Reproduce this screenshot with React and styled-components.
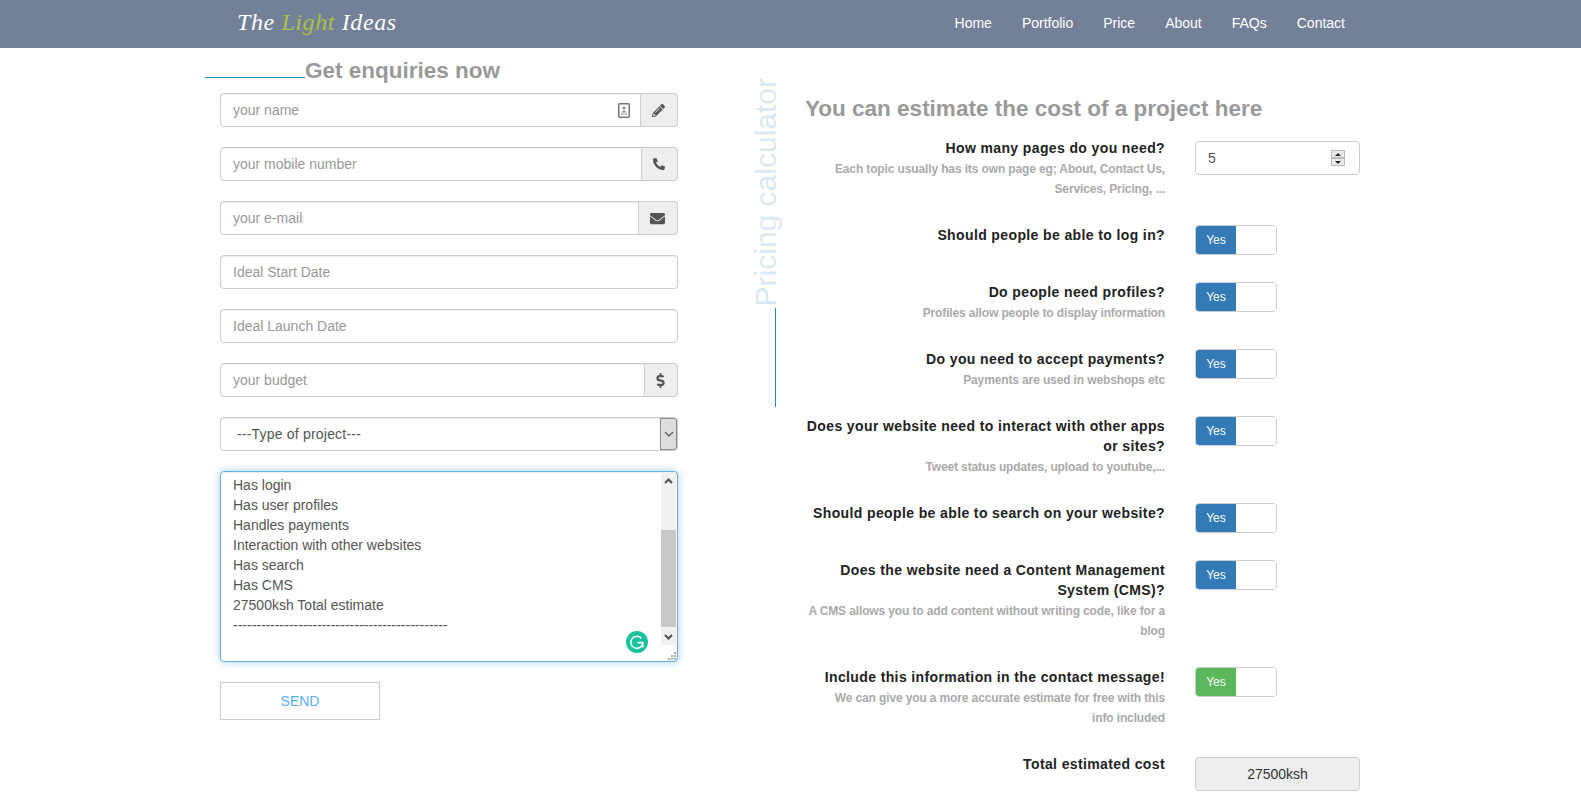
import styled, { createGlobalStyle } from 'styled-components';
import { FaPencilAlt, FaPhoneAlt, FaEnvelope, FaDollarSign } from 'react-icons/fa';

const GlobalStyle = createGlobalStyle`
  * { box-sizing: border-box; }
  body {
    margin: 0;
    background: #fff;
    font-family: "Liberation Sans", Arial, sans-serif;
    font-size: 14px;
    color: #333;
  }
`;

const NAV_ITEMS = ['Home', 'Portfolio', 'Price', 'About', 'FAQs', 'Contact'];

const QUESTIONS = [
  { title: 'Should people be able to log in?' },
  { title: 'Do people need profiles?', hint: 'Profiles allow people to display information' },
  { title: 'Do you need to accept payments?', hint: 'Payments are used in webshops etc' },
  { title: 'Does your website need to interact with other apps or sites?', hint: 'Tweet status updates, upload to youtube,...' },
  { title: 'Should people be able to search on your website?' },
  { title: 'Does the website need a Content Management System (CMS)?', hint: 'A CMS allows you to add content without writing code, like for a blog' },
  { title: 'Include this information in the contact message!', hint: 'We can give you a more accurate estimate for free with this\ninfo included', green: true },
];

const MESSAGE = [
  'Has login',
  'Has user profiles',
  'Handles payments',
  'Interaction with other websites',
  'Has search',
  'Has CMS',
  '27500ksh Total estimate',
  '----------------------------------------------',
].join('\n');

function ContactCardIcon() {
  return (
    <svg width="12" height="15" viewBox="0 0 12 15">
      <rect x="0.75" y="0.75" width="10.5" height="13.5" rx="1" fill="#fff" stroke="#777" strokeWidth="1.5" />
      <circle cx="6" cy="5" r="1.5" fill="#888" />
      <path d="M3.5 9.5 Q6 5.5 8.5 9.5 Z" fill="#888" />
      <rect x="3" y="10.5" width="6" height="1.5" fill="#bbb" />
    </svg>
  );
}

function GrammarlyIcon() {
  return (
    <svg width="22" height="22" viewBox="0 0 22 22">
      <circle cx="11" cy="11" r="11" fill="#15c39a" />
      <path d="M15.4 7.4 A6 6 0 1 0 16.6 13" fill="none" stroke="#fff" strokeWidth="1.6" />
      <path d="M11.5 11.6 H16.8 V16.4" fill="none" stroke="#fff" strokeWidth="1.6" />
    </svg>
  );
}

export default function App() {
  return (
    <>
      <GlobalStyle />
      <Header>
        <Logo>The <em>Light</em> Ideas</Logo>
        <Nav>
          {NAV_ITEMS.map((item) => <NavLink key={item}>{item}</NavLink>)}
        </Nav>
      </Header>
      <Main>
        <LeftColumn>
          <EnquiryHeading>
            <HeadingRule />
            <HeadingText>Get enquiries now</HeadingText>
          </EnquiryHeading>
          <Form>
            <InputGroup>
              <InputWrap>
                <TextInput placeholder="your name" />
                <AutofillBadge><ContactCardIcon /></AutofillBadge>
              </InputWrap>
              <Addon $width={37}><FaPencilAlt size={13} /></Addon>
            </InputGroup>
            <InputGroup>
              <TextInput placeholder="your mobile number" />
              <Addon $width={36}><FaPhoneAlt size={12} /></Addon>
            </InputGroup>
            <InputGroup>
              <TextInput placeholder="your e-mail" />
              <Addon $width={39}><FaEnvelope size={15} /></Addon>
            </InputGroup>
            <TextInput $alone placeholder="Ideal Start Date" />
            <TextInput $alone placeholder="Ideal Launch Date" />
            <InputGroup>
              <TextInput placeholder="your budget" />
              <Addon $width={33}><FaDollarSign size={15} /></Addon>
            </InputGroup>
            <SelectWrap>
              <ProjectSelect defaultValue="">
                <option value="">---Type of project---</option>
              </ProjectSelect>
              <SelectArrow>
                <svg width="10" height="6" viewBox="0 0 10 6">
                  <path d="M1 1 L5 5 L9 1" fill="none" stroke="#555" strokeWidth="1.2" />
                </svg>
              </SelectArrow>
            </SelectWrap>
            <MessageWrap>
              <MessageArea readOnly value={MESSAGE} spellCheck={false} />
              <Scrollbar>
                <ScrollArrow>
                  <svg width="9" height="6" viewBox="0 0 9 6">
                    <path d="M1 5 L4.5 1.5 L8 5" fill="none" stroke="#505050" strokeWidth="2" />
                  </svg>
                </ScrollArrow>
                <ScrollTrack><ScrollThumb /></ScrollTrack>
                <ScrollArrow>
                  <svg width="9" height="6" viewBox="0 0 9 6">
                    <path d="M1 1 L4.5 4.5 L8 1" fill="none" stroke="#505050" strokeWidth="2" />
                  </svg>
                </ScrollArrow>
              </Scrollbar>
              <GrammarlyBadge><GrammarlyIcon /></GrammarlyBadge>
              <Resizer>
                <svg width="10" height="10" viewBox="0 0 10 10" fill="#aaa">
                  <rect x="7" y="1" width="2" height="2" />
                  <rect x="4" y="4" width="2" height="2" />
                  <rect x="7" y="4" width="2" height="2" />
                  <rect x="1" y="7" width="2" height="2" />
                  <rect x="4" y="7" width="2" height="2" />
                  <rect x="7" y="7" width="2" height="2" />
                </svg>
              </Resizer>
            </MessageWrap>
            <SendButton>SEND</SendButton>
          </Form>
        </LeftColumn>

        <SideLabel>
          <SideText>Pricing calculator</SideText>
          <SideRule />
        </SideLabel>

        <Calculator>
          <CalculatorTitle>You can estimate the cost of a project here</CalculatorTitle>
          <Row>
            <LabelBlock>
              <Question>How many pages do you need?</Question>
              <Hint>Each topic usually has its own page eg; About, Contact Us, Services, Pricing, ...</Hint>
            </LabelBlock>
            <NumberBox>
              <span>5</span>
              <Spinner>
                <SpinButton><SpinUp /></SpinButton>
                <SpinButton><SpinDown /></SpinButton>
              </Spinner>
            </NumberBox>
          </Row>
          {QUESTIONS.map((q) => (
            <Row key={q.title}>
              <LabelBlock>
                <Question>{q.title}</Question>
                {q.hint && <Hint>{q.hint}</Hint>}
              </LabelBlock>
              <Toggle>
                <ToggleOn $green={q.green}>Yes</ToggleOn>
                <ToggleOff />
              </Toggle>
            </Row>
          ))}
          <Row>
            <LabelBlock>
              <Question>Total estimated cost</Question>
            </LabelBlock>
            <TotalBox>27500ksh</TotalBox>
          </Row>
        </Calculator>
      </Main>
    </>
  );
}

const Header = styled.header`
  height: 48px;
  background: #738198;
  display: flex;
  align-items: center;
  justify-content: space-between;
  padding: 0 236px 0 237px;
`;

const Logo = styled.div`
  font-family: "Liberation Serif", serif;
  font-style: italic;
  font-size: 24px;
  letter-spacing: 0.6px;
  color: #fff;
  margin-top: -4px;

  em {
    color: #a9c23f;
  }
`;

const Nav = styled.nav`
  display: flex;
  gap: 30px;
  margin-top: -2px;
`;

const NavLink = styled.a`
  color: #fff;
  font-size: 14px;
`;

const Main = styled.main`
  display: flex;
  padding-left: 205px;
`;

const LeftColumn = styled.section`
  width: 473px;
  padding-top: 7px;
`;

const EnquiryHeading = styled.div`
  display: flex;
  align-items: flex-start;
  height: 30px;
  margin-bottom: 8px;
`;

const HeadingRule = styled.span`
  width: 100px;
  height: 1px;
  margin-top: 22px;
  background: #1b8bbf;
`;

const HeadingText = styled.h2`
  margin: 0;
  font-size: 22.5px;
  line-height: 32px;
  font-weight: 700;
  color: #999;
`;

const Form = styled.form`
  margin-left: 15px;
  display: flex;
  flex-direction: column;
  gap: 20px;
`;

const InputGroup = styled.div`
  display: flex;
  height: 34px;
`;

const InputWrap = styled.div`
  position: relative;
  flex: 1;
  display: flex;
`;

const TextInput = styled.input`
  flex: ${(p) => (p.$alone ? 'none' : '1')};
  min-width: 0;
  width: 100%;
  height: 34px;
  padding: 6px 12px;
  border: 1px solid #ccc;
  border-radius: ${(p) => (p.$alone ? '4px' : '4px 0 0 4px')};
  box-shadow: inset 0 1px 1px rgba(0, 0, 0, 0.075);
  font-family: inherit;
  font-size: 14px;
  color: #555;
  outline: none;

  &::placeholder {
    color: #999;
    opacity: 1;
  }
`;

const AutofillBadge = styled.span`
  position: absolute;
  right: 11px;
  top: 10px;
  display: flex;
`;

const Addon = styled.span`
  width: ${(p) => p.$width}px;
  padding-right: 1px;
  display: flex;
  align-items: center;
  justify-content: center;
  background: #eee;
  border: 1px solid #ccc;
  border-left: 0;
  border-radius: 0 4px 4px 0;
  color: #555;
`;

const SelectWrap = styled.div`
  position: relative;
  height: 34px;
`;

const ProjectSelect = styled.select`
  appearance: none;
  width: 100%;
  height: 34px;
  padding: 0 12px 0 16px;
  background: #fff;
  border: 1px solid #ccc;
  border-radius: 4px;
  box-shadow: inset 0 1px 1px rgba(0, 0, 0, 0.075);
  font-family: inherit;
  font-size: 14px;
  letter-spacing: 0.2px;
  color: #555;
  outline: none;
`;

const SelectArrow = styled.span`
  position: absolute;
  right: 1px;
  top: 1px;
  bottom: 1px;
  width: 17px;
  display: flex;
  align-items: center;
  justify-content: center;
  background: #ddd;
  border: 1px solid #888;
  border-radius: 0 3px 3px 0;
`;

const MessageWrap = styled.div`
  position: relative;
  height: 191px;
`;

const MessageArea = styled.textarea`
  display: block;
  width: 100%;
  height: 100%;
  padding: 3px 12px;
  border: 1px solid #66afe9;
  border-radius: 4px;
  box-shadow: inset 0 1px 1px rgba(0, 0, 0, 0.075), 0 0 8px rgba(102, 175, 233, 0.6);
  font-family: inherit;
  font-size: 14px;
  line-height: 20px;
  color: #555;
  overflow: hidden;
  resize: none;
  outline: none;
`;

const Scrollbar = styled.div`
  position: absolute;
  right: 2px;
  top: 1px;
  width: 15px;
  height: 173px;
  display: flex;
  flex-direction: column;
  background: #f1f1f1;
`;

const ScrollArrow = styled.span`
  height: 17px;
  display: flex;
  align-items: center;
  justify-content: center;
`;

const ScrollTrack = styled.div`
  flex: 1;
  padding-top: 41px;
`;

const ScrollThumb = styled.div`
  height: 97px;
  background: #c8c8c8;
`;

const GrammarlyBadge = styled.span`
  position: absolute;
  right: 30px;
  bottom: 9px;
  display: flex;
`;

const Resizer = styled.span`
  position: absolute;
  right: 1px;
  bottom: 1px;
  display: flex;
`;

const SendButton = styled.button`
  width: 160px;
  height: 38px;
  background: #fff;
  border: 1px solid #ccc;
  font-family: inherit;
  font-size: 14px;
  color: #5aaef5;
`;

const SideLabel = styled.aside`
  width: 27px;
  margin: 30px 0 0 71px;
  display: flex;
  flex-direction: column;
  align-items: flex-end;
`;

const SideText = styled.span`
  writing-mode: vertical-rl;
  transform: rotate(180deg);
  font-size: 30px;
  line-height: 34px;
  color: #dbe9f2;
  white-space: nowrap;
  margin: 0 -7px 2px 0;
`;

const SideRule = styled.span`
  width: 1px;
  height: 99px;
  background: #1b8bbf;
`;

const Calculator = styled.section`
  width: 555px;
  margin-left: 29px;
  padding-top: 46px;
`;

const CalculatorTitle = styled.h2`
  margin: 0 0 14px;
  font-size: 22.5px;
  line-height: 30px;
  font-weight: 700;
  color: #999;
`;

const Row = styled.div`
  display: grid;
  grid-template-columns: 360px auto;
  column-gap: 30px;
  justify-content: start;
  align-items: start;
  margin-bottom: 27px;
`;

const LabelBlock = styled.div`
  text-align: right;
`;

const Question = styled.div`
  font-size: 14px;
  line-height: 20px;
  font-weight: 700;
  letter-spacing: 0.38px;
  color: #222;
`;

const Hint = styled.div`
  font-size: 12px;
  line-height: 20px;
  font-weight: 700;
  letter-spacing: -0.13px;
  white-space: pre-line;
  color: #aaa;
  margin: 1px 0 -1px;
`;

const NumberBox = styled.div`
  width: 165px;
  height: 34px;
  margin-top: 3px;
  padding: 0 14px 0 12px;
  display: flex;
  align-items: center;
  justify-content: space-between;
  border: 1px solid #ccc;
  border-radius: 4px;
  color: #555;
`;

const Spinner = styled.div`
  width: 14px;
  display: flex;
  flex-direction: column;
`;

const SpinButton = styled.span`
  height: 8px;
  display: flex;
  align-items: center;
  justify-content: center;
  background: #eaeaea;
  border: 1px solid #bbb;
`;

const SpinUp = styled.i`
  border: 3px solid transparent;
  border-top: 0;
  border-bottom: 3px solid #222;
`;

const SpinDown = styled.i`
  border: 3px solid transparent;
  border-bottom: 0;
  border-top: 3px solid #222;
`;

const Toggle = styled.div`
  width: 82px;
  height: 30px;
  display: flex;
  border: 1px solid #ccc;
  border-radius: 4px;
  overflow: hidden;
`;

const ToggleOn = styled.span`
  width: 40px;
  display: flex;
  align-items: center;
  justify-content: center;
  background: ${(p) => (p.$green ? '#5cb85c' : '#337ab7')};
  color: #fff;
  font-size: 12px;
`;

const ToggleOff = styled.span`
  flex: 1;
  background: #fff;
`;

const TotalBox = styled.div`
  width: 165px;
  height: 34px;
  margin-top: 3px;
  display: flex;
  align-items: center;
  justify-content: center;
  background: #eee;
  border: 1px solid #ccc;
  border-radius: 4px;
  color: #333;
`;
